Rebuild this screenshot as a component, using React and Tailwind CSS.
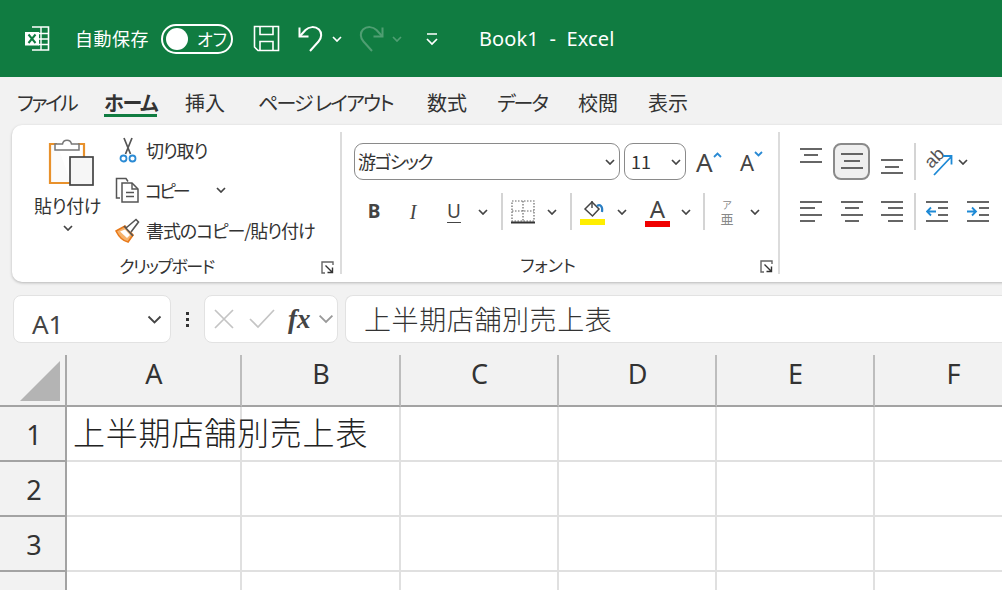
// App.jsx
const tabs = [
  { label: "ファイル", w: "w-[104px]", pl: "pl-[17px]", text: "tracking-[-2.5px]" },
  { label: "ホーム", w: "w-[81px]", active: true, text: "tracking-[-1.3px]" },
  { label: "挿入", w: "w-[73px]" },
  { label: "ページ レイアウト", w: "w-[169px]", text: "tracking-[-1.8px]" },
  { label: "数式", w: "w-[70px]" },
  { label: "データ", w: "w-[81px]", text: "tracking-[-2px]" },
  { label: "校閲", w: "w-[70px]" },
  { label: "表示", w: "w-[70px]" },
];

const columns = [
  { name: "A", w: "w-[175px]" },
  { name: "B", w: "w-[159px]" },
  { name: "C", w: "w-[158px]" },
  { name: "D", w: "w-[158px]" },
  { name: "E", w: "w-[158px]" },
  { name: "F", w: "w-[158px]" },
];

function Chev({ className = "", color = "#444", w = 10, sw = 1.7 }) {
  return (
    <svg width={w} height={w * 0.6} viewBox="0 0 10 6" className={`shrink-0 ${className}`} fill="none">
      <path d="M1 1l4 4 4-4" stroke={color} strokeWidth={sw} />
    </svg>
  );
}

function Sep({ className = "" }) {
  return <div className={`w-[2px] h-[37px] bg-[#d4d4d4] shrink-0 ${className}`} />;
}

function ExcelIcon() {
  return (
    <svg width="27" height="27" viewBox="0 0 27 27" fill="none" className="shrink-0">
      <path d="M8 2h16.500v23H8" stroke="#fff" strokeWidth="1.6" />
      <path d="M14 8.500h10M14 14h10M14 19.500h10M17 2v23" stroke="#fff" strokeWidth="1.4" />
      <rect x="1" y="7" width="14" height="13.500" fill="#fff" />
      <path d="M4.500 9.500l7 8.500M11.500 9.500l-7 8.500" stroke="#107c41" strokeWidth="2" />
    </svg>
  );
}

function SaveIcon() {
  return (
    <svg width="27" height="27" viewBox="0 0 27 27" fill="none" className="shrink-0">
      <path d="M1.500 1.500h24v24H5l-3.500-3.500z" stroke="#fff" strokeWidth="1.6" />
      <path d="M7 1.500v8h13v-8M7 25.500v-9h13v9" stroke="#fff" strokeWidth="1.6" />
    </svg>
  );
}

function UndoIcon({ color = "#fff", flip = false }) {
  return (
    <svg width="26" height="27" viewBox="0 0 26 27" fill="none" className={`shrink-0 ${flip ? "-scale-x-100" : ""}`}>
      <path d="M12 26l8.500-9.500c3.500-4 3.500-9 .5-12C17 1 11 1.500 7.500 5L2 11" stroke={color} strokeWidth="2" />
      <path d="M1.500 2.500V11.500h9" stroke={color} strokeWidth="2" />
    </svg>
  );
}

function PasteIcon() {
  return (
    <svg width="46" height="49" viewBox="0 0 46 49" fill="none" className="shrink-0">
      <path d="M9 6H2v39h21" stroke="#e8912c" strokeWidth="2.200" fill="#fbfbfb" />
      <path d="M30 6h6v14" stroke="#e8912c" strokeWidth="2.200" />
      <path d="M7 12V6h7.500c1-5 8-5 9 0H31v6z" fill="#fff" stroke="#777" strokeWidth="1.500" />
      <rect x="22" y="19" width="23" height="28" fill="#f6f6f6" stroke="#444" strokeWidth="1.700" />
    </svg>
  );
}

function ScissorsIcon() {
  return (
    <svg width="24" height="26" viewBox="0 0 24 26" fill="none" className="shrink-0">
      <path d="M8 1l6.500 16M16 1L9.500 17" stroke="#555" strokeWidth="1.700" />
      <circle cx="7.500" cy="21.500" r="3" stroke="#2a8ad4" strokeWidth="1.800" />
      <circle cx="16.500" cy="21.500" r="3" stroke="#2a8ad4" strokeWidth="1.800" />
    </svg>
  );
}

function CopyIcon() {
  return (
    <svg width="26" height="26" viewBox="0 0 26 26" fill="none" className="shrink-0">
      <path d="M5 21H1.500V1.500h9.500l2 3" stroke="#555" strokeWidth="1.500" />
      <path d="M7 6h10l6 6v13H7z" fill="#fff" stroke="#555" strokeWidth="1.500" />
      <path d="M17 6v6h6M11 15.500h8M11 19.500h8" stroke="#555" strokeWidth="1.400" />
    </svg>
  );
}

function BrushIcon() {
  return (
    <svg width="25" height="25" viewBox="0 0 25 25" fill="none" className="shrink-0">
      <path d="M1 13l9-5 8 9-5 7C8 23 4 19 1 13z" fill="#f6b26b" stroke="#e8791a" strokeWidth="1.600" />
      <path d="M5 13.500l5-2 5 5.500-3 3" fill="#fff" />
      <path d="M11 10L21 1.500l2.500 2.500L16 14" fill="#fff" stroke="#555" strokeWidth="1.600" />
      <path d="M9 8l9 10" stroke="#555" strokeWidth="1.600" />
    </svg>
  );
}

function Launcher() {
  return (
    <svg width="13" height="13" viewBox="0 0 13 13" fill="none" className="shrink-0">
      <path d="M12 4V1H1v11h3" stroke="#666" strokeWidth="1.400" />
      <path d="M4.500 4.500l7 7M11.500 6.500v5h-5" stroke="#333" strokeWidth="1.400" />
    </svg>
  );
}

function BorderIcon() {
  return (
    <svg width="24" height="24" viewBox="0 0 24 24" fill="none" className="shrink-0">
      <rect x="1" y="1" width="22" height="20" stroke="#666" strokeWidth="1.200" strokeDasharray="1.500 1.500" />
      <path d="M12 1v20M1 11h22" stroke="#666" strokeWidth="1.200" strokeDasharray="1.500 1.500" />
      <path d="M0 22.500h24" stroke="#333" strokeWidth="2" />
    </svg>
  );
}

function FillIcon() {
  return (
    <svg width="25" height="26" viewBox="0 0 25 26" fill="none" className="shrink-0">
      <path d="M5 10l7-7 7 7-6.500 7z" stroke="#444" strokeWidth="1.500" fill="#fff" />
      <path d="M12 9V2" stroke="#444" strokeWidth="1.400" />
      <path d="M17 7c3-2 6 0 5 6" stroke="#2a7fc4" strokeWidth="2.200" />
      <rect x="0" y="20" width="25" height="6" fill="#ffee00" />
    </svg>
  );
}

// lines: [y, x1, x2]
function Lines({ lines, w = 22, h = 37, extra = null }) {
  return (
    <svg width={w} height={h} viewBox={`0 0 ${w} ${h}`} fill="none" className="shrink-0">
      {lines.map(([y, x1, x2]) => (
        <path key={`${y}-${x1}`} d={`M${x1} ${y}H${x2}`} stroke="#555" strokeWidth="1.800" />
      ))}
      {extra}
    </svg>
  );
}

function OrientIcon() {
  return (
    <svg width="29" height="28" viewBox="0 0 29 28" fill="none" className="shrink-0 overflow-visible">
      <text x="1" y="16" fontSize="18" fill="#555" transform="rotate(-45 10 12)" fontFamily="'Liberation Sans', sans-serif">ab</text>
      <path d="M9 27L26 9M18 8h8.500v8.500" stroke="#1e8ad6" strokeWidth="1.800" />
    </svg>
  );
}

function ClipboardGroup() {
  return (
    <div className="w-[328px] shrink-0 flex flex-col h-full">
      <div className="flex">
        <div className="w-[103px] flex flex-col items-center pt-[13px] pl-[8px]">
          <div className="ml-[6px]">
            <PasteIcon />
          </div>
          <span className="mt-[5px] text-[18px] leading-[26px] text-[#333] tracking-[-0.4px]">貼り付け</span>
          <Chev className="mt-[7px]" />
        </div>
        <div className="flex flex-col pt-[5px] text-[18px] text-[#333]">
          <div className="h-[40px] flex items-center pl-[1px]">
            <ScissorsIcon />
            <span className="ml-[6px] tracking-[-1.2px]">切り取り</span>
          </div>
          <div className="h-[40px] flex items-center">
            <CopyIcon />
            <span className="ml-[4px] tracking-[-3px]">コピー</span>
            <Chev className="ml-[28px]" />
          </div>
          <div className="h-[40px] flex items-center">
            <BrushIcon />
            <span className="ml-[6px] tracking-[-1.1px]">書式のコピー/貼り付け</span>
          </div>
        </div>
      </div>
      <div className="mt-auto h-[34px] flex items-center">
        <span className="flex-1 text-center text-[17px] text-[#333] pl-[5px] tracking-[-1.5px]">クリップボード</span>
        <div className="w-[24px] pl-[5px] pt-[2px]">
          <Launcher />
        </div>
      </div>
    </div>
  );
}

function FontGroup() {
  return (
    <div className="w-[436px] shrink-0 flex flex-col h-full">
      <div className="flex items-center pl-[12px] pt-[18px]">
        <div className="w-[266px] h-[37px] border border-[#8a8a8a] rounded-[9px] flex items-center justify-between pl-[3px] pr-[4px] text-[18px] text-[#333]">
          <span className="tracking-[-1.6px]">游ゴシック</span>
          <Chev />
        </div>
        <div className="ml-[4px] w-[62px] h-[37px] border border-[#8a8a8a] rounded-[9px] flex items-center justify-between pl-[6px] pr-[4px] text-[18px] text-[#333]">
          <span>11</span>
          <Chev />
        </div>
        <div className="ml-[10px] w-[44px] flex items-start text-[#444]">
          <span className="text-[26px] leading-[32px] font-['Noto_Sans',sans-serif]">A</span>
          <svg width="9" height="6" viewBox="0 0 9 6" fill="none" className="mt-[6px]">
            <path d="M1 5l3.500-3.500L8 5" stroke="#2a8ad4" strokeWidth="1.800" />
          </svg>
        </div>
        <div className="w-[34px] flex items-start text-[#444]">
          <span className="text-[22px] leading-[32px] font-['Noto_Sans',sans-serif]">A</span>
          <svg width="9" height="6" viewBox="0 0 9 6" fill="none" className="mt-[5px]">
            <path d="M1 1l3.500 3.500L8 1" stroke="#2a8ad4" strokeWidth="1.800" />
          </svg>
        </div>
      </div>
      <div className="flex items-center pl-[12px] mt-[13px] h-[37px] text-[#444] font-['Noto_Sans',sans-serif]">
        <span className="w-[40px] text-center font-bold text-[19px]">B</span>
        <span className="w-[38px] text-center italic text-[20px] font-['Liberation_Serif',serif]">I</span>
        <span className="w-[44px] text-center text-[19px] underline underline-offset-[4px]">U</span>
        <Chev className="ml-[2px]" />
        <Sep className="ml-[13px]" />
        <div className="ml-[8px]">
          <BorderIcon />
        </div>
        <Chev className="ml-[12px]" />
        <Sep className="ml-[13px]" />
        <div className="ml-[8px]">
          <FillIcon />
        </div>
        <Chev className="ml-[12px]" />
        <div className="ml-[18px] w-[25px] flex flex-col items-center">
          <span className="text-[24px] leading-[24px]">A</span>
          <div className="w-[25px] h-[6px] bg-[#f00000]" />
        </div>
        <Chev className="ml-[11px]" />
        <Sep className="ml-[12px]" />
        <div className="ml-[14px] w-[16px] flex flex-col items-center text-[#888] font-['Noto_Sans_CJK_JP',sans-serif]">
          <span className="text-[10px] leading-[13px]">ア</span>
          <span className="text-[13px] leading-[15px]">亜</span>
        </div>
        <Chev className="ml-[15px]" />
      </div>
      <div className="mt-auto h-[34px] flex items-center">
        <span className="flex-1 text-center text-[17px] text-[#333]">フォント</span>
        <div className="w-[24px] pl-[6px] pt-[2px]">
          <Launcher />
        </div>
      </div>
    </div>
  );
}

function AlignGroup() {
  return (
    <div className="flex-1 flex flex-col pl-[20px] pt-[18px]">
      <div className="flex items-center">
        <Lines lines={[[6, 0, 22], [12, 4, 18], [19, 0, 22]]} />
        <div className="ml-[11px] w-[37px] h-[37px] rounded-[8px] border-2 border-[#8a8a8a] bg-[#efefef] flex items-center justify-center">
          <Lines lines={[[8, 0, 22], [15, 3, 19], [22, 0, 22]]} h={31} />
        </div>
        <div className="ml-[11px]">
          <Lines lines={[[17, 0, 22], [24, 4, 18], [30, 0, 22]]} />
        </div>
        <Sep className="ml-[11px]" />
        <div className="ml-[9px]">
          <OrientIcon />
        </div>
        <Chev className="ml-[4px]" />
      </div>
      <div className="flex items-center mt-[13px]">
        <Lines lines={[[9, 0, 22], [15, 0, 15], [22, 0, 22], [28, 0, 15]]} />
        <div className="ml-[19px]">
          <Lines lines={[[9, 0, 22], [15, 4, 18], [22, 0, 22], [28, 4, 18]]} />
        </div>
        <div className="ml-[18px]">
          <Lines lines={[[9, 0, 22], [15, 7, 22], [22, 0, 22], [28, 7, 22]]} />
        </div>
        <Sep className="ml-[11px]" />
        <div className="ml-[10px]">
          <Lines
            lines={[[9, 0, 22], [15, 12, 22], [22, 12, 22], [28, 0, 22]]}
            extra={<path d="M10 18.500H1M5 14.500l-4 4 4 4" stroke="#1e8ad6" strokeWidth="1.800" />}
          />
        </div>
        <div className="ml-[19px]">
          <Lines
            lines={[[9, 0, 22], [15, 12, 22], [22, 12, 22], [28, 0, 22]]}
            extra={<path d="M0 18.500h9M5 14.500l4 4-4 4" stroke="#1e8ad6" strokeWidth="1.800" />}
          />
        </div>
      </div>
    </div>
  );
}

function FormulaBar() {
  return (
    <div className="flex mt-[13px] h-[48px] pl-[13px]">
      <div className="w-[158px] bg-white border border-[#e2e2e2] rounded-[8px] flex items-center justify-between pl-[18px] pr-[8px] shrink-0">
        <span className="text-[26px] text-[#444] mt-[10px] font-['Noto_Sans',sans-serif] leading-none">A1</span>
        <Chev w={15} sw={1.2} />
      </div>
      <div className="w-[33px] flex flex-col items-center justify-center gap-[3px] shrink-0">
        <span className="w-[3px] h-[3px] bg-[#333]" />
        <span className="w-[3px] h-[3px] bg-[#333]" />
        <span className="w-[3px] h-[3px] bg-[#333]" />
      </div>
      <div className="w-[134px] bg-white border border-[#e2e2e2] rounded-[8px] flex items-center pl-[9px] shrink-0">
        <svg width="20" height="20" viewBox="0 0 20 20" fill="none" className="shrink-0">
          <path d="M1 1l18 18M19 1L1 19" stroke="#c4c4c4" strokeWidth="1.700" />
        </svg>
        <svg width="26" height="20" viewBox="0 0 26 20" fill="none" className="ml-[15px] shrink-0">
          <path d="M1 10l8 8L25 1" stroke="#c4c4c4" strokeWidth="1.700" />
        </svg>
        <span className="ml-[13px] w-[26px] italic font-bold text-[27px] leading-none text-[#444] font-['Liberation_Serif',serif]">fx</span>
        <Chev className="ml-[4px]" color="#999" w={16} sw={1.1} />
      </div>
      <div className="ml-[7px] flex-1 bg-white border border-[#e2e2e2] border-r-0 rounded-l-[8px] flex items-center pl-[18px] text-[27px] tracking-[0.6px] font-light text-[#333]">
        上半期店舗別売上表
      </div>
    </div>
  );
}

function Sheet() {
  return (
    <div className="mt-[12px]">
      <div className="flex h-[52px]">
        <div className="w-[67px] shrink-0 border-r-2 border-b-2 border-r-[#a9a9a9] border-b-[#a3a3a3] flex items-end justify-end pr-[5px] pb-[4px]">
          <svg width="40" height="40" viewBox="0 0 40 40" className="shrink-0">
            <path d="M40 0v40H0z" fill="#b4b4b4" />
          </svg>
        </div>
        {columns.map((c) => (
          <div
            key={c.name}
            className={`${c.w} shrink-0 border-r-2 border-b-2 border-r-[#bdbdbd] border-b-[#a3a3a3] flex items-center justify-center text-[27px] text-[#333] font-['Noto_Sans',sans-serif] pb-[12px] pl-[1px]`}
          >
            {c.name}
          </div>
        ))}
      </div>
      {[1, 2, 3, 4].map((row) => (
        <div key={row} className="flex h-[55px]">
          <div className="w-[67px] shrink-0 border-r-2 border-b-2 border-[#a3a3a3] flex items-center justify-center text-[27px] text-[#333] font-['Noto_Sans',sans-serif] pt-[3px] pl-[3px]">
            {row}
          </div>
          {columns.map((c) => (
            <div key={c.name} className={`${c.w} shrink-0 bg-white border-r-2 border-b-2 border-[#e0e0e0] flex items-center`}>
              {row === 1 && c.name === "A" && (
                <span className="pl-[6px] pb-[6px] whitespace-nowrap text-[32px] leading-none tracking-[0.8px] font-light text-[#222] relative">
                  上半期店舗別売上表
                </span>
              )}
            </div>
          ))}
        </div>
      ))}
    </div>
  );
}

export default function App() {
  return (
    <div className="w-[1002px] h-[590px] overflow-hidden bg-[#f2f2f2] font-['Noto_Sans_CJK_JP','Noto_Sans',sans-serif] [font-feature-settings:'palt']">
      <div className="h-[77px] bg-[#107c41] flex items-center pl-[24px] text-white">
        <ExcelIcon />
        <span className="ml-[24px] text-[18px] tracking-[0.5px]">自動保存</span>
        <div className="ml-[12px] w-[72px] h-[30px] rounded-full border-2 border-white flex items-center pl-[3px]">
          <span className="w-[22px] h-[22px] rounded-full bg-white" />
          <span className="ml-[9px] text-[17px]">オフ</span>
        </div>
        <div className="ml-[20px]">
          <SaveIcon />
        </div>
        <div className="ml-[18px]">
          <UndoIcon />
        </div>
        <Chev className="ml-[8px]" color="#fff" />
        <div className="ml-[16px]">
          <UndoIcon color="#4f9e72" flip />
        </div>
        <Chev className="ml-[8px]" color="#4f9e72" />
        <svg width="16" height="16" viewBox="0 0 16 16" fill="none" className="ml-[22px] shrink-0">
          <path d="M3 3h10M3 8l5 5 5-5" stroke="#fff" strokeWidth="1.700" />
        </svg>
        <span className="ml-[39px] text-[20px] whitespace-pre font-['Noto_Sans',sans-serif] tracking-[0.1px]">Book1  -  Excel</span>
      </div>

      <div className="h-[48px] flex items-stretch text-[20px] text-[#333] pt-[3px]">
        {tabs.map((t) => (
          <div key={t.label} className={`${t.w} shrink-0 flex items-center ${t.pl || ""}`}>
            <span className={`relative whitespace-nowrap ${t.text || ""} ${t.active ? "font-bold" : ""}`}>
              {t.label}
              {t.active && <span className="absolute left-0 right-0 top-[26px] h-[3px] bg-[#107c41]" />}
            </span>
          </div>
        ))}
      </div>

      <div className="ml-[12px] w-[1000px] h-[157px] bg-white rounded-[10px] shadow-[0_1px_3px_rgba(0,0,0,0.25)] flex">
        <ClipboardGroup />
        <div className="w-[2px] h-[142px] mt-[7px] bg-[#dcdcdc] shrink-0" />
        <FontGroup />
        <div className="w-[2px] h-[142px] mt-[7px] bg-[#dcdcdc] shrink-0" />
        <AlignGroup />
      </div>

      <FormulaBar />
      <Sheet />
    </div>
  );
}
